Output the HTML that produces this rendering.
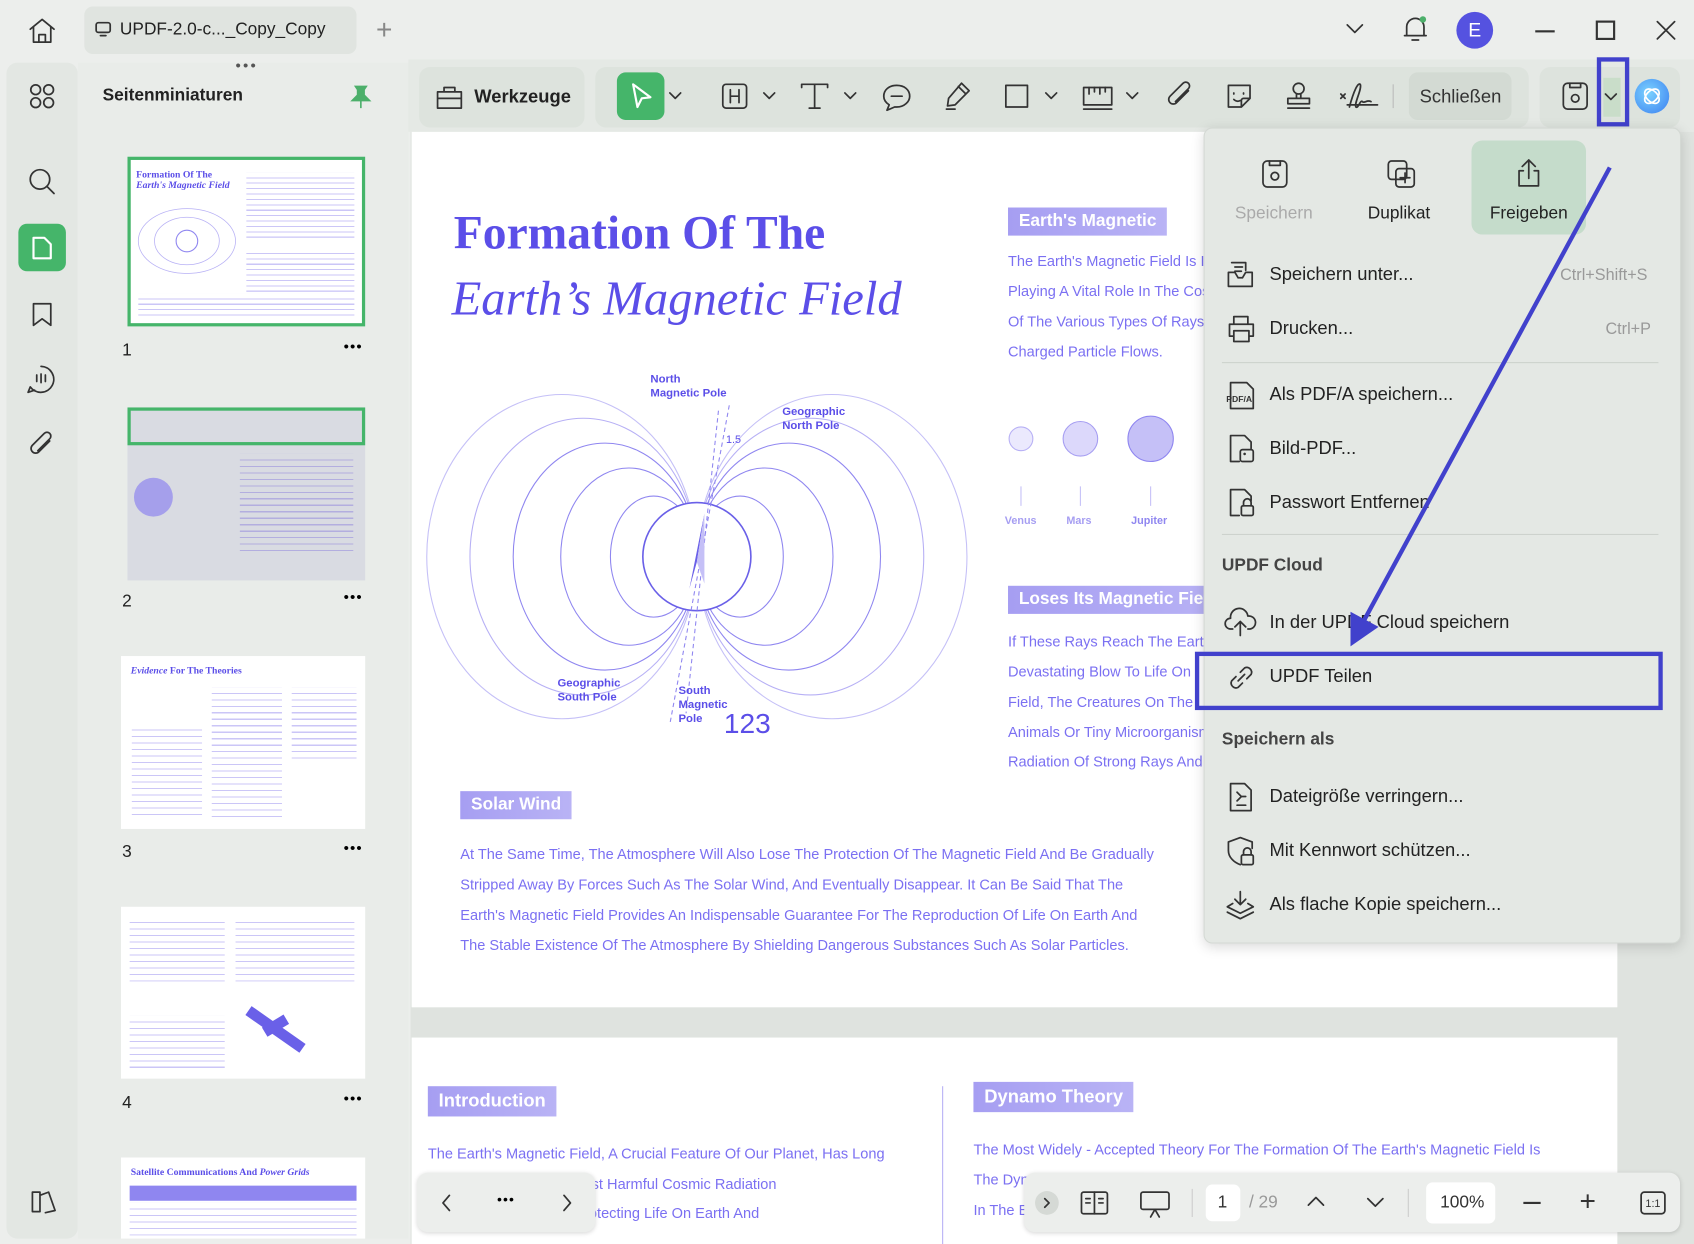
<!DOCTYPE html>
<html><head><meta charset="utf-8"><style>
*{box-sizing:border-box;margin:0;padding:0}
body{width:1694px;height:1244px;overflow:hidden;background:#eef0ee;font-family:"Liberation Sans","DejaVu Sans",sans-serif}
#s{width:1568px;height:1151px;position:relative;transform:scale(1.0804,1.0808);transform-origin:0 0;background:#eceeec}
.a{position:absolute}
.t{position:absolute;white-space:nowrap}
.pl{color:#7b70f2;font-size:13.5px}
.lab{position:absolute;background:linear-gradient(90deg,#a69ef2,#b9b3f5);color:#fff;font-weight:bold;font-size:16px;padding:4px 10px;white-space:nowrap}
.mi{position:absolute;left:1175px;font-size:17px;color:#222;white-space:nowrap}
.sc{position:absolute;right:36px;font-size:15px;color:#999}
svg{position:absolute;overflow:visible}
.ic{fill:none;stroke:#333;stroke-width:1.6;stroke-linecap:round;stroke-linejoin:round}
</style></head><body><div id="s">
<!-- top bar -->
<svg style="left:25px;top:15px" width="28" height="26" class="ic"><path class="ic" d="M3 12L14 3L25 12M6 10V24H22V10M11 24V17H17V24"/></svg>
<div class="a" style="left:78px;top:6px;width:252px;height:44px;background:#e0e4e0;border-radius:8px"></div>
<svg style="left:88px;top:20px" width="16" height="14"><rect x="1" y="1" width="13" height="9" rx="2" class="ic"/><path d="M5 13h5" class="ic"/></svg>
<div class="t" style="left:111px;top:19px;font-size:16px;color:#222">UPDF-2.0-c..._Copy_Copy</div>
<div class="t" style="left:348px;top:12px;font-size:26px;color:#888;font-weight:300">+</div>
<svg style="left:1246px;top:22px" width="16" height="10"><path d="M1 1L8 8L15 1" class="ic"/></svg>
<svg style="left:1298px;top:14px" width="24" height="26"><path d="M4 19V11A8 8 0 0 1 20 11V19H2H22M9 23H15" class="ic"/><circle cx="19" cy="4" r="3" fill="#4caf6a"/></svg>
<div class="a" style="left:1348px;top:11px;width:34px;height:34px;border-radius:50%;background:#5552e0;color:#fff;text-align:center;line-height:34px;font-size:18px">E</div>
<div class="a" style="left:1421px;top:28px;width:18px;height:2px;background:#333"></div>
<div class="a" style="left:1477px;top:19px;width:18px;height:18px;border:2px solid #333"></div>
<svg style="left:1533px;top:19px" width="18" height="18"><path d="M1 1L17 17M17 1L1 17" class="ic"/></svg>
<!-- left rail -->
<div class="a" style="left:6px;top:58px;width:66px;height:1088px;background:#e3e7e3;border-radius:10px"></div>
<svg style="left:27px;top:77px" width="24" height="24" class="ic"><circle cx="6" cy="6" r="4.5" class="ic"/><circle cx="18" cy="6" r="4.5" class="ic"/><circle cx="6" cy="18" r="4.5" class="ic"/><circle cx="18" cy="18" r="4.5" class="ic"/></svg>
<svg style="left:26px;top:155px" width="26" height="26"><circle cx="11" cy="11" r="9" class="ic"/><path d="M18 18L24 24" class="ic"/></svg>
<div class="a" style="left:17px;top:207px;width:44px;height:44px;border-radius:8px;background:#45b56a"></div>
<svg style="left:29px;top:218px" width="20" height="23"><path d="M2 2H12L18 8V21H2Z" fill="none" stroke="#fff" stroke-width="2" stroke-linejoin="round"/></svg>
<svg style="left:29px;top:279px" width="20" height="24"><path d="M2 2H18V22L10 16L2 22Z" class="ic"/></svg>
<svg style="left:24px;top:337px" width="28" height="28"><path d="M14 2A12 12 0 1 1 4 21L2 26L8 24" class="ic"/><path d="M10 10V16M14 9V17M18 10V16" class="ic"/></svg>
<svg style="left:26px;top:398px" width="26" height="28"><path d="M20 10L10 20A4 4 0 0 1 4 14L15 3A3 3 0 0 1 20 8L9 19" class="ic"/></svg>
<svg style="left:27px;top:1100px" width="26" height="24"><path d="M3 3H10V21H3ZM10 6L18 3L24 20L15 22" class="ic"/></svg>
<!-- thumb panel -->
<div class="a" style="left:72px;top:58px;width:306px;height:1088px;background:#e9ece9"></div>
<div class="t" style="left:218px;top:52px;color:#555;font-size:14px;letter-spacing:2px">•••</div>
<div class="t" style="left:95px;top:80px;font-size:16px;font-weight:bold;color:#222">Seitenminiaturen</div>
<svg style="left:324px;top:78px" width="20" height="24"><path d="M5 2H15L13 5V10L18 15H2L7 10V5Z M10 15V22" fill="#4caf6a" stroke="#4caf6a" stroke-width="1.5"/></svg>
<div class="a" style="left:118px;top:145px;width:220px;height:157px;background:#fff;border:3px solid #45b56a"></div>
<div class="t" style="left:126px;top:156px;font-family:'Liberation Serif',serif;font-size:9px;color:#5b4ee8;font-weight:bold">Formation Of The<br><i>Earth's Magnetic Field</i></div>
<svg style="left:125px;top:185px" width="100" height="80"><ellipse cx="48" cy="38" rx="45" ry="30" fill="none" stroke="#b7b0f5" stroke-width=".7"/><ellipse cx="48" cy="38" rx="30" ry="22" fill="none" stroke="#b7b0f5" stroke-width=".7"/><circle cx="48" cy="38" r="10" fill="none" stroke="#8f86f0"/></svg>
<div class="a" style="left:228px;top:160px;width:100px;height:60px;background:repeating-linear-gradient(#fff 0 4px,#cbc6f7 4px 5px)"></div>
<div class="a" style="left:228px;top:230px;width:100px;height:40px;background:repeating-linear-gradient(#fff 0 4px,#cbc6f7 4px 5px)"></div>
<div class="a" style="left:128px;top:272px;width:200px;height:22px;background:repeating-linear-gradient(#fff 0 4px,#cbc6f7 4px 5px)"></div>
<div class="t" style="left:113px;top:316px;font-size:16px;color:#222">1</div><div class="t" style="left:318px;top:312px;font-size:14px;letter-spacing:1px">•••</div>
<div class="a" style="left:118px;top:377px;width:220px;height:160px;background:#d9dbe2"></div>
<div class="a" style="left:118px;top:377px;width:220px;height:35px;border:3px solid #45b56a"></div>
<svg style="left:120px;top:430px" width="80" height="60"><circle cx="22" cy="30" r="18" fill="#8f86f0" opacity=".7"/></svg>
<div class="a" style="left:222px;top:420px;width:105px;height:90px;background:repeating-linear-gradient(#d9dbe2 0 5px,#b3aedf 5px 6px)"></div>
<div class="t" style="left:113px;top:548px;font-size:16px;color:#222">2</div><div class="t" style="left:318px;top:544px;font-size:14px;letter-spacing:1px">•••</div>
<div class="a" style="left:112px;top:607px;width:226px;height:160px;background:#fff"></div>
<div class="t" style="left:121px;top:615px;font-family:'Liberation Serif',serif;font-size:9px;color:#5b4ee8;font-weight:bold"><i>Evidence</i> For The Theories</div>
<div class="a" style="left:122px;top:670px;width:65px;height:85px;background:repeating-linear-gradient(#fff 0 5px,#cbc6f7 5px 6px)"></div>
<div class="a" style="left:196px;top:636px;width:65px;height:120px;background:repeating-linear-gradient(#fff 0 5px,#cbc6f7 5px 6px)"></div>
<div class="a" style="left:270px;top:636px;width:60px;height:70px;background:repeating-linear-gradient(#fff 0 5px,#cbc6f7 5px 6px)"></div>
<div class="t" style="left:113px;top:780px;font-size:16px;color:#222">3</div><div class="t" style="left:318px;top:776px;font-size:14px;letter-spacing:1px">•••</div>
<div class="a" style="left:112px;top:839px;width:226px;height:159px;background:#fff"></div>
<div class="a" style="left:120px;top:848px;width:88px;height:60px;background:repeating-linear-gradient(#fff 0 5px,#cbc6f7 5px 6px)"></div>
<div class="a" style="left:218px;top:848px;width:110px;height:60px;background:repeating-linear-gradient(#fff 0 5px,#cbc6f7 5px 6px)"></div>
<div class="a" style="left:120px;top:940px;width:88px;height:50px;background:repeating-linear-gradient(#fff 0 5px,#cbc6f7 5px 6px)"></div>
<svg style="left:225px;top:925px" width="60" height="50"><path d="M5 10L55 45M20 30L40 18" stroke="#6a60e8" stroke-width="10"/></svg>
<div class="t" style="left:113px;top:1012px;font-size:16px;color:#222">4</div><div class="t" style="left:318px;top:1008px;font-size:14px;letter-spacing:1px">•••</div>
<div class="a" style="left:112px;top:1071px;width:226px;height:75px;background:#fff"></div>
<div class="t" style="left:121px;top:1079px;font-family:'Liberation Serif',serif;font-size:9px;color:#5b4ee8;font-weight:bold">Satellite Communications And <i>Power Grids</i></div>
<div class="a" style="left:120px;top:1097px;width:210px;height:14px;background:#8f86f0"></div>
<div class="a" style="left:120px;top:1113px;width:210px;height:30px;background:repeating-linear-gradient(#fff 0 5px,#cbc6f7 5px 6px)"></div>
<!-- toolbar -->
<div class="a" style="left:378px;top:55px;width:1190px;height:67px;background:#e5e9e5"></div>
<div class="a" style="left:388px;top:62px;width:153px;height:56px;background:#dde3dd;border-radius:10px"></div>
<svg style="left:402px;top:76px" width="28" height="26"><path d="M3 9H25V24H3ZM9 9V5H19V9M3 15H25" class="ic"/></svg>
<div class="t" style="left:439px;top:80px;font-size:17px;font-weight:bold;color:#222">Werkzeuge</div>
<div class="a" style="left:551px;top:62px;width:864px;height:56px;background:#dde3dd;border-radius:10px"></div>
<div class="a" style="left:571px;top:67px;width:44px;height:44px;background:#45b56a;border-radius:8px"></div>
<svg style="left:583px;top:76px" width="22" height="26"><path d="M3 2L19 14L11 15L7 23Z" fill="none" stroke="#fff" stroke-width="2" stroke-linejoin="round"/></svg>
<svg style="left:619px;top:85px" width="12" height="8"><path d="M1 1L6 6L11 1" class="ic"/></svg>
<svg style="left:667px;top:76px" width="26" height="26"><rect x="2" y="2" width="22" height="22" rx="3" class="ic"/><path d="M9 7V19M17 7V19M9 13H17" class="ic"/></svg>
<svg style="left:706px;top:85px" width="12" height="8"><path d="M1 1L6 6L11 1" class="ic"/></svg>
<svg style="left:740px;top:76px" width="28" height="26"><path d="M2 5V2H26V5M14 2V24M9 24H19" class="ic"/></svg>
<svg style="left:781px;top:85px" width="12" height="8"><path d="M1 1L6 6L11 1" class="ic"/></svg>
<svg style="left:815px;top:76px" width="30" height="28"><path d="M15 3C8 3 3 7 3 13C3 16 5 19 8 21L6 26L13 23C14 23 14 23 15 23C22 23 27 18 27 13C27 7 22 3 15 3Z" class="ic"/><path d="M10 13H20" class="ic"/></svg>
<svg style="left:872px;top:74px" width="28" height="30"><path d="M18 3L25 10L12 23L5 24L6 17ZM15 6L22 13M4 27H12" class="ic"/></svg>
<svg style="left:929px;top:77px" width="24" height="24"><rect x="2" y="2" width="20" height="20" class="ic"/></svg>
<svg style="left:967px;top:85px" width="12" height="8"><path d="M1 1L6 6L11 1" class="ic"/></svg>
<svg style="left:1001px;top:77px" width="30" height="26"><rect x="2" y="4" width="26" height="16" class="ic"/><path d="M7 4V10M12 4V8M17 4V10M22 4V8M2 24H28" class="ic"/></svg>
<svg style="left:1042px;top:85px" width="12" height="8"><path d="M1 1L6 6L11 1" class="ic"/></svg>
<svg style="left:1078px;top:74px" width="28" height="30"><path d="M22 10L11 21A4 4 0 0 1 5 15L17 3A3 3 0 0 1 22 8L10 20" class="ic"/></svg>
<svg style="left:1133px;top:75px" width="28" height="28"><path d="M4 4H24V16L16 24H4Z M16 24V18A2 2 0 0 1 18 16H24 M9 11V12M18 11V12M9 17C11 19 13 19 15 18" class="ic"/></svg>
<svg style="left:1188px;top:74px" width="28" height="30"><circle cx="14" cy="8" r="5" class="ic"/><path d="M12 13V17H16V13M4 17H24V22H4ZM4 26H24" class="ic"/></svg>
<svg style="left:1239px;top:74px" width="40" height="30"><path d="M2 13L6 17M6 13L2 17M10 25C14 10 18 2 20 4C22 8 14 22 16 25C18 27 20 18 22 20C24 22 26 18 30 20M8 23H36" class="ic"/></svg>
<div class="a" style="left:1289px;top:78px;width:1px;height:22px;background:#bbb"></div>
<div class="a" style="left:1304px;top:67px;width:95px;height:44px;background:#d3dad3;border-radius:8px"></div>
<div class="t" style="left:1314px;top:80px;font-size:17px;color:#333">Schließen</div>
<div class="a" style="left:1425px;top:62px;width:130px;height:56px;background:#dde3dd;border-radius:10px"></div>
<svg style="left:1445px;top:75px" width="26" height="28"><rect x="2" y="2" width="22" height="24" rx="4" class="ic"/><path d="M8 2V6H18V2" class="ic"/><circle cx="13" cy="16" r="3.5" class="ic"/></svg>
<div class="a" style="left:1484px;top:72px;width:16px;height:36px;background:#c9ddc9"></div>
<svg style="left:1485px;top:86px" width="12" height="8"><path d="M1 1L6 6L11 1" class="ic"/></svg>
<div class="a" style="left:1478px;top:53px;width:30px;height:64px;border:4px solid #4141cc"></div>
<div class="a" style="left:1513px;top:73px;width:32px;height:32px;border-radius:50%;background:radial-gradient(circle at 40% 40%,#7bd3ff,#3a7ef0)"></div>
<svg style="left:1519px;top:79px" width="20" height="20"><ellipse cx="10" cy="10" rx="8" ry="5" fill="none" stroke="#fff" stroke-width="1.6" transform="rotate(45 10 10)"/><ellipse cx="10" cy="10" rx="8" ry="5" fill="none" stroke="#fff" stroke-width="1.6" transform="rotate(-45 10 10)"/></svg>
<!-- doc area -->
<div class="a" style="left:380px;top:122px;width:1188px;height:1029px;background:#dfe3df"></div>
<div class="a" style="left:381px;top:122px;width:1116px;height:810px;background:#fff"></div>
<div class="a" style="left:381px;top:960px;width:1116px;height:191px;background:#fff"></div>
<div class="t" style="left:420px;top:190px;font-family:'Liberation Serif',serif;font-weight:bold;font-size:44px;color:#5b4ee8">Formation Of The</div>
<div class="t" style="left:418px;top:250px;font-family:'Liberation Serif',serif;font-style:italic;font-size:45px;color:#5b4ee8">Earth’s Magnetic Field</div>
<svg style="left:390px;top:340px" width="520" height="350">
<g fill="none" stroke="#8f86f0" stroke-width="1">
<ellipse cx="130" cy="175" rx="125" ry="150" stroke="#c5c0f7"/>
<ellipse cx="380" cy="175" rx="125" ry="150" stroke="#c5c0f7"/>
<ellipse cx="150" cy="175" rx="105" ry="128" stroke="#b7b0f5"/>
<ellipse cx="360" cy="175" rx="105" ry="128" stroke="#b7b0f5"/>
<ellipse cx="170" cy="175" rx="85" ry="105"/>
<ellipse cx="340" cy="175" rx="85" ry="105"/>
<ellipse cx="192" cy="175" rx="63" ry="82"/>
<ellipse cx="318" cy="175" rx="63" ry="82"/>
<ellipse cx="215" cy="175" rx="40" ry="56"/>
<ellipse cx="295" cy="175" rx="40" ry="56"/>
<circle cx="255" cy="175" r="50" fill="#fff" stroke="#6a60e8" stroke-width="1.5"/>
<path d="M285 35L230 330M275 40L245 320" stroke-dasharray="4 3"/>
</g>
<path d="M262 135L248 205L255 180Z" fill="#6a60e8"/><path d="M262 135L255 180L262 200Z" fill="#c5c0f7"/>
<text x="212" y="14" font-size="10.5" fill="#5b4ee8" font-weight="bold" font-family="Liberation Sans">North</text>
<text x="212" y="27" font-size="10.5" fill="#5b4ee8" font-weight="bold" font-family="Liberation Sans">Magnetic Pole</text>
<text x="334" y="44" font-size="10.5" fill="#5b4ee8" font-weight="bold" font-family="Liberation Sans">Geographic</text>
<text x="334" y="57" font-size="10.5" fill="#5b4ee8" font-weight="bold" font-family="Liberation Sans">North Pole</text>
<text x="282" y="70" font-size="10" fill="#5b4ee8" font-family="Liberation Sans">1.5</text>
<text x="126" y="295" font-size="10.5" fill="#5b4ee8" font-weight="bold" font-family="Liberation Sans">Geographic</text>
<text x="126" y="308" font-size="10.5" fill="#5b4ee8" font-weight="bold" font-family="Liberation Sans">South Pole</text>
<text x="238" y="302" font-size="10.5" fill="#5b4ee8" font-weight="bold" font-family="Liberation Sans">South</text>
<text x="238" y="315" font-size="10.5" fill="#5b4ee8" font-weight="bold" font-family="Liberation Sans">Magnetic</text>
<text x="238" y="328" font-size="10.5" fill="#5b4ee8" font-weight="bold" font-family="Liberation Sans">Pole</text>
<text x="280" y="338" font-size="26" fill="#5b4ee8" font-family="Liberation Sans">123</text>
</svg>
<div class="lab" style="left:933px;top:192px">Earth's Magnetic</div>
<div class="t pl" style="left:933px;top:234px">The Earth's Magnetic Field Is I</div>
<div class="t pl" style="left:933px;top:262px">Playing A Vital Role In The Cos</div>
<div class="t pl" style="left:933px;top:290px">Of The Various Types Of Rays</div>
<div class="t pl" style="left:933px;top:318px">Charged Particle Flows.</div>
<svg style="left:925px;top:380px" width="190" height="110">
<circle cx="20" cy="26" r="11" fill="#ebe9fd" stroke="#b7b0f5"/><circle cx="75" cy="26" r="16" fill="#dcd8fb" stroke="#a69ef2"/><circle cx="140" cy="26" r="21" fill="#c5c0f7" stroke="#8f86f0"/>
<path d="M20 70V88M75 70V88M140 70V88" stroke="#c5c0f7"/>
<text x="5" y="105" font-size="10" fill="#a69ef2" font-weight="bold" font-family="Liberation Sans">Venus</text>
<text x="62" y="105" font-size="10" fill="#a69ef2" font-weight="bold" font-family="Liberation Sans">Mars</text>
<text x="122" y="105" font-size="10" fill="#8f86f0" font-weight="bold" font-family="Liberation Sans">Jupiter</text>
</svg>
<div class="lab" style="left:933px;top:542px">Loses Its Magnetic Field</div>
<div class="t pl" style="left:933px;top:586px">If These Rays Reach The Earth</div>
<div class="t pl" style="left:933px;top:614px">Devastating Blow To Life On</div>
<div class="t pl" style="left:933px;top:642px">Field, The Creatures On The</div>
<div class="t pl" style="left:933px;top:670px">Animals Or Tiny Microorganism</div>
<div class="t pl" style="left:933px;top:697px">Radiation Of Strong Rays And</div>
<div class="lab" style="left:426px;top:732px">Solar Wind</div>
<div class="t pl" style="left:426px;top:783px">At The Same Time, The Atmosphere Will Also Lose The Protection Of The Magnetic Field And Be Gradually</div>
<div class="t pl" style="left:426px;top:811px">Stripped Away By Forces Such As The Solar Wind, And Eventually Disappear. It Can Be Said That The</div>
<div class="t pl" style="left:426px;top:839px">Earth's Magnetic Field Provides An Indispensable Guarantee For The Reproduction Of Life On Earth And</div>
<div class="t pl" style="left:426px;top:867px">The Stable Existence Of The Atmosphere By Shielding Dangerous Substances Such As Solar Particles.</div>
<div class="lab" style="left:396px;top:1005px;font-size:17px">Introduction</div>
<div class="t pl" style="left:396px;top:1060px">The Earth's Magnetic Field, A Crucial Feature Of Our Planet, Has Long</div>
<div class="t pl" style="left:396px;top:1088px">Served As A Shield Against Harmful Cosmic Radiation</div>
<div class="t pl" style="left:396px;top:1115px">Playing A Vital Role In Protecting Life On Earth And</div>
<div class="a" style="left:872px;top:1005px;width:1px;height:146px;background:#b7b0f5"></div>
<div class="lab" style="left:901px;top:1001px;font-size:17px">Dynamo Theory</div>
<div class="t pl" style="left:901px;top:1056px">The Most Widely - Accepted Theory For The Formation Of The Earth's Magnetic Field Is</div>
<div class="t pl" style="left:901px;top:1084px">The Dyn</div>
<div class="t pl" style="left:901px;top:1112px">In The E</div>
<!-- bottom nav -->
<div class="a" style="left:386px;top:1085px;width:165px;height:55px;background:#eceeec;border-radius:10px;box-shadow:0 1px 4px rgba(0,0,0,.15)"></div>
<svg style="left:408px;top:1105px" width="10" height="16"><path d="M8 1L2 8L8 15" class="ic"/></svg>
<div class="t" style="left:460px;top:1102px;font-size:13px;letter-spacing:1px">•••</div>
<svg style="left:520px;top:1105px" width="10" height="16"><path d="M2 1L8 8L2 15" class="ic" stroke="#999"/></svg>
<div class="a" style="left:948px;top:1085px;width:607px;height:55px;background:#eceeec;border-radius:10px;box-shadow:0 1px 4px rgba(0,0,0,.15)"></div>
<div class="a" style="left:958px;top:1102px;width:22px;height:22px;border-radius:50%;background:#d5d9d5"></div>
<svg style="left:965px;top:1108px" width="8" height="10"><path d="M2 1L6 5L2 9" class="ic"/></svg>
<svg style="left:999px;top:1101px" width="28" height="24"><rect x="2" y="2" width="24" height="20" rx="2" class="ic"/><path d="M14 2V22M6 8H10M6 12H10M18 8H22M18 12H22" class="ic"/></svg>
<svg style="left:1054px;top:1100px" width="30" height="28"><rect x="2" y="3" width="26" height="16" rx="2" class="ic"/><path d="M11 26L15 19L19 26" class="ic"/></svg>
<div class="a" style="left:1103px;top:1100px;width:1px;height:26px;background:#ccc"></div>
<div class="a" style="left:1116px;top:1096px;width:32px;height:34px;background:#fff;border-radius:6px"></div>
<div class="t" style="left:1127px;top:1104px;font-size:16px;color:#333">1</div>
<div class="t" style="left:1156px;top:1104px;font-size:16px;color:#999">/ 29</div>
<svg style="left:1210px;top:1106px" width="16" height="10"><path d="M1 9L8 2L15 9" class="ic" stroke="#aaa"/></svg>
<svg style="left:1265px;top:1108px" width="16" height="10"><path d="M1 1L8 8L15 1" class="ic"/></svg>
<div class="a" style="left:1303px;top:1100px;width:1px;height:26px;background:#ccc"></div>
<div class="a" style="left:1320px;top:1094px;width:64px;height:38px;background:#fff;border-radius:6px"></div>
<div class="t" style="left:1333px;top:1104px;font-size:16px;color:#333">100%</div>
<div class="a" style="left:1410px;top:1112px;width:16px;height:2px;background:#333"></div>
<div class="t" style="left:1462px;top:1096px;font-size:26px;color:#333;font-weight:300">+</div>
<svg style="left:1517px;top:1101px" width="26" height="24"><rect x="2" y="2" width="22" height="20" rx="3" class="ic"/><text x="6" y="16" font-size="10" fill="#333" font-family="Liberation Sans">1:1</text></svg>
<!-- menu -->
<div class="a" style="left:1114px;top:118px;width:442px;height:755px;background:#e4e8e4;border:1px solid #d4d9d4;border-radius:8px;box-shadow:0 3px 12px rgba(0,0,0,.15)"></div>
<div class="a" style="left:1362px;top:130px;width:106px;height:87px;background:#c5dccb;border-radius:10px"></div>
<svg style="left:1167px;top:147px" width="26" height="28"><rect x="2" y="2" width="22" height="24" rx="4" class="ic" stroke="#aaa"/><path d="M8 2V6H18V2" class="ic" stroke="#aaa"/><circle cx="13" cy="16" r="3.5" class="ic" stroke="#aaa"/></svg>
<svg style="left:1283px;top:147px" width="28" height="28"><rect x="2" y="2" width="17" height="17" rx="3" class="ic"/><rect x="9" y="9" width="17" height="17" rx="3" class="ic" fill="#e4e8e4"/><path d="M17.5 13V22M13 17.5H22" class="ic"/></svg>
<svg style="left:1402px;top:145px" width="26" height="30"><path d="M13 20V3M7 9L13 3L19 9M8 13H4V27H22V13H18" class="ic"/></svg>
<div class="t" style="left:1143px;top:189px;font-size:16px;color:#aaa">Speichern</div>
<div class="t" style="left:1266px;top:189px;font-size:16px;color:#222">Duplikat</div>
<div class="t" style="left:1379px;top:189px;font-size:16px;color:#222">Freigeben</div>
<svg style="left:1135px;top:240px" width="26" height="28"><path d="M5 3H18V10M8 7H15M8 11H14M2 12V25H24V12H18L15 17H11L8 12Z" class="ic"/></svg>
<div class="mi" style="top:244px">Speichern unter...</div><div class="sc" style="top:246px;left:1444px">Ctrl+Shift+S</div>
<svg style="left:1135px;top:290px" width="28" height="28"><path d="M7 10V3H20V10M3 10H25V21H21M7 21H3V10M7 16H21V26H7Z" class="ic"/></svg>
<div class="mi" style="top:294px">Drucken...</div><div class="sc" style="top:296px;left:1486px">Ctrl+P</div>
<div class="a" style="left:1131px;top:335px;width:404px;height:1px;background:#cdd2cd"></div>
<svg style="left:1134px;top:352px" width="30" height="28"><path d="M5 2H20L26 8V26H5Z" class="ic"/><text x="1" y="20" font-size="8" font-weight="bold" fill="#333" font-family="Liberation Sans">PDF/A</text></svg>
<div class="mi" style="top:355px">Als PDF/A speichern...</div>
<svg style="left:1135px;top:401px" width="28" height="28"><path d="M4 2H17L23 8V14M4 2V26H12" class="ic"/><rect x="13" y="15" width="12" height="11" rx="2" class="ic"/><circle cx="17" cy="19" r="1.2" fill="#333"/></svg>
<div class="mi" style="top:405px">Bild-PDF...</div>
<svg style="left:1135px;top:451px" width="28" height="28"><path d="M4 2H17L23 8V12M4 2V26H12" class="ic"/><rect x="14" y="17" width="11" height="9" rx="1.5" class="ic"/><path d="M16 17V14A3.5 3.5 0 0 1 23 14V17" class="ic"/></svg>
<div class="mi" style="top:455px">Passwort Entfernen</div>
<div class="a" style="left:1131px;top:494px;width:404px;height:1px;background:#cdd2cd"></div>
<div class="t" style="left:1131px;top:515px;font-size:16px;font-weight:bold;color:#444">UPDF Cloud</div>
<svg style="left:1133px;top:562px" width="30" height="28"><path d="M8 20H6A5 5 0 0 1 6 10A8 8 0 0 1 22 8A6 6 0 0 1 24 20H22M15 26V14M10 18L15 13L20 18" class="ic"/></svg>
<div class="mi" style="top:566px">In der UPDF Cloud speichern</div>
<div class="a" style="left:1106px;top:603px;width:433px;height:54px;border:4px solid #4141cc"></div>
<svg style="left:1134px;top:613px" width="30" height="28"><path d="M12 17L18 11M10 13L6 17A4.5 4.5 0 0 0 12 23L16 19M14 9L18 5A4.5 4.5 0 0 1 24 11L20 15" class="ic"/></svg>
<div class="mi" style="top:616px">UPDF Teilen</div>
<div class="t" style="left:1131px;top:676px;font-size:16px;font-weight:bold;color:#444">Speichern als</div>
<svg style="left:1135px;top:723px" width="28" height="30"><path d="M4 2H17L23 8V27H4Z M10 10L14 14L10 18M18 14H14 M10 22H18" class="ic"/></svg>
<div class="mi" style="top:727px">Dateigröße verringern...</div>
<svg style="left:1134px;top:773px" width="30" height="30"><path d="M14 2L3 6V14C3 20 8 25 14 27M14 2L25 6V12" class="ic"/><rect x="15" y="18" width="11" height="9" rx="1.5" class="ic"/><path d="M17 18V15A3.5 3.5 0 0 1 24 15V18" class="ic"/></svg>
<div class="mi" style="top:777px">Mit Kennwort schützen...</div>
<svg style="left:1133px;top:823px" width="30" height="30"><path d="M15 2V14M10 9L15 14L20 9M3 16L15 22L27 16M3 21L15 27L27 21M3 16L8 13M27 16L22 13" class="ic"/></svg>
<div class="mi" style="top:827px">Als flache Kopie speichern...</div>
<!-- arrow -->
<svg style="left:0;top:0" width="1568" height="1151"><path d="M1490 155L1262 575" stroke="#4141cc" stroke-width="4"/><path d="M1250 598L1250 566L1276 580Z" fill="#4141cc"/></svg>
</div></body></html>
